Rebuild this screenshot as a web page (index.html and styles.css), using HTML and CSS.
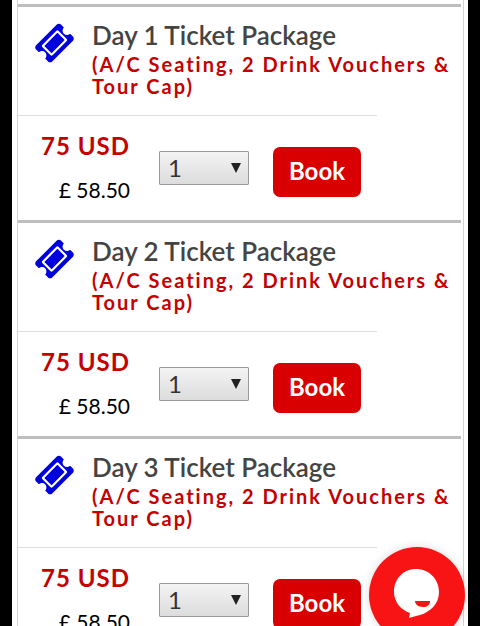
FILE: index.html
```html
<!DOCTYPE html>
<html lang="en">

<head>
    <meta charset="UTF-8">
    <meta name="viewport" content="width=device-width, initial-scale=1.0">
    <title>Ticket Packages</title>
    <link rel="stylesheet" href="styles.css">
</head>

<body>
    <!-- Ticket icon shared by all packages -->
    <svg class="sprite" aria-hidden="true">
        <symbol id="ticket" viewBox="0 0 1792 1792">
            <path d="M1024 452l316 316-572 572-316-316zm-211 979l618-618q19-19 19-45t-19-45l-362-362q-18-18-45-18t-45 18l-618 618q-19 19-19 45t19 45l362 362q18 18 45 18t45-18zm889-637l-907 908q-37 37-90.5 37t-90.5-37l-126-126q56-56 56-136t-56-136-136-56-136 56l-125-126q-37-37-37-90.5t37-90.5l907-906q37-37 90.5-37t90.5 37l125 125q-56 56-56 136t56 136 136 56 136-56l126 125q37 37 37 90.5t-37 90.5z"/>
        </symbol>
    </svg>

    <main class="page">
        <div class="tickets">
            <section class="ticket">
                <div class="ticket-info">
                    <svg class="ticket-icon"><use href="#ticket"/></svg>
                    <div>
                        <h2>Day 1 Ticket Package</h2>
                        <p class="includes">(A/C Seating, 2 Drink Vouchers &amp; Tour Cap)</p>
                    </div>
                </div>
                <form class="ticket-order">
                    <div class="prices">
                        <div class="price">75 USD</div>
                        <div class="converted">£ 58.50</div>
                    </div>
                    <div class="quantity">
                        <select aria-label="Day 1 quantity">
                            <option>1</option>
                            <option>2</option>
                            <option>3</option>
                            <option>4</option>
                        </select>
                        <svg class="arrow" viewBox="0 0 10 10"><path d="M0 0h10L5 10z"/></svg>
                    </div>
                    <button type="button" class="book">Book</button>
                </form>
            </section>

            <section class="ticket">
                <div class="ticket-info">
                    <svg class="ticket-icon"><use href="#ticket"/></svg>
                    <div>
                        <h2>Day 2 Ticket Package</h2>
                        <p class="includes">(A/C Seating, 2 Drink Vouchers &amp; Tour Cap)</p>
                    </div>
                </div>
                <form class="ticket-order">
                    <div class="prices">
                        <div class="price">75 USD</div>
                        <div class="converted">£ 58.50</div>
                    </div>
                    <div class="quantity">
                        <select aria-label="Day 2 quantity">
                            <option>1</option>
                            <option>2</option>
                            <option>3</option>
                            <option>4</option>
                        </select>
                        <svg class="arrow" viewBox="0 0 10 10"><path d="M0 0h10L5 10z"/></svg>
                    </div>
                    <button type="button" class="book">Book</button>
                </form>
            </section>

            <section class="ticket">
                <div class="ticket-info">
                    <svg class="ticket-icon"><use href="#ticket"/></svg>
                    <div>
                        <h2>Day 3 Ticket Package</h2>
                        <p class="includes">(A/C Seating, 2 Drink Vouchers &amp; Tour Cap)</p>
                    </div>
                </div>
                <form class="ticket-order">
                    <div class="prices">
                        <div class="price">75 USD</div>
                        <div class="converted">£ 58.50</div>
                    </div>
                    <div class="quantity">
                        <select aria-label="Day 3 quantity">
                            <option>1</option>
                            <option>2</option>
                            <option>3</option>
                            <option>4</option>
                        </select>
                        <svg class="arrow" viewBox="0 0 10 10"><path d="M0 0h10L5 10z"/></svg>
                    </div>
                    <button type="button" class="book">Book</button>
                </form>
            </section>
        </div>
    </main>

    <!-- Chat bubble floating over the page -->
    <button type="button" class="chat" aria-label="Open chat">
        <svg viewBox="0 0 96 96">
            <path fill="#fff" d="M47 22c13 0 23 10 23 23 0 12-9 20-19 23-4 1-8 2-11 3l1-5C32 63 25 55 25 45c0-13 9-23 22-23z"/>
            <path fill="#f81414" d="M46 54h15c0 4-3 6-7 6-5 0-8-3-8-6z"/>
        </svg>
    </button>
</body>

</html>
```
FILE: styles.css
```css
* {
    box-sizing: border-box;
}

body {
    margin: 0;
    padding: 0 12px;
    background-color: #000;
    font-family: Lato, sans-serif;
}

.sprite {
    display: none;
}

.page {
    padding: 0 4px 0 5px;
    background-color: #fff;
}

.tickets {
    padding: 4px 2px 0 0;
    border-left: 1px solid #d4d4d4;
    border-right: 1px solid #d4d4d4;
}

.ticket {
    border-top: 3px solid #bebebe;
}

/* Name and contents of the package */
.ticket-info {
    display: flex;
    gap: 17px;
    height: 108px;
    padding: 14px 4px 0 16px;
}

.ticket-icon {
    flex: none;
    width: 41px;
    height: 44px;
    fill: #0000dc;
}

h2 {
    margin: 0 0 4px;
    color: #444;
    font-size: 26px;
    font-weight: 600;
    line-height: 28px;
}

.includes {
    margin: 0;
    color: #c40000;
    font-size: 20px;
    font-weight: 700;
    line-height: 22px;
    letter-spacing: 2px;
}

/* Price, quantity and book button */
.ticket-order {
    display: flex;
    align-items: center;
    width: 81%;
    height: 105px;
    border-top: 1px solid #ddd;
}

.prices {
    width: 112px;
    text-align: right;
}

.price {
    color: #c40000;
    font-size: 24px;
    font-weight: 700;
    line-height: 44px;
    letter-spacing: 1px;
}

.converted {
    color: #000;
    font-size: 21px;
    line-height: 44px;
}

.quantity {
    position: relative;
    margin-left: 29px;
}

select {
    display: block;
    width: 90px;
    height: 34px;
    padding: 0 8px 2px;
    appearance: none;
    border: 1px solid #999;
    border-radius: 1px;
    background: linear-gradient(#f4f4f4, #dcdcdc);
    color: #333;
    font-family: inherit;
    font-size: 24px;
}

.arrow {
    position: absolute;
    top: 12px;
    right: 8px;
    width: 10px;
    height: 10px;
    fill: #222;
    pointer-events: none;
}

.book {
    width: 88px;
    height: 50px;
    margin: 8px 0 0 24px;
    padding: 0 0 4px;
    border: 0;
    border-radius: 7px;
    background-color: #d80000;
    color: #fff;
    font-family: inherit;
    font-size: 24px;
    font-weight: 700;
}

.chat {
    position: fixed;
    right: 15px;
    bottom: -17px;
    width: 96px;
    height: 96px;
    padding: 0;
    border: 0;
    border-radius: 50%;
    background-color: #f81414;
    box-shadow: 0 0 10px rgba(0, 0, 0, 0.15);
}

.chat svg {
    display: block;
}
```
